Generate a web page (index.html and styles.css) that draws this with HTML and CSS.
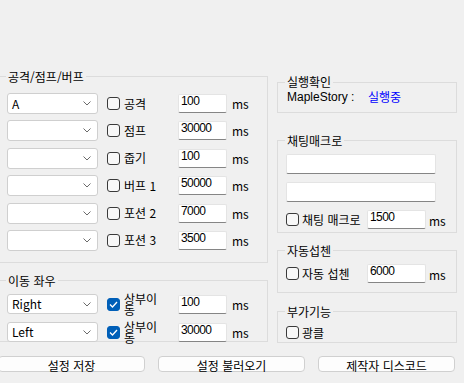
FILE: index.html
```html
<!DOCTYPE html>
<html lang="ko">
<head>
  <meta charset="UTF-8" />
  <title>매크로</title>
  <link rel="stylesheet" href="styles.css">
</head>
<body>
  <div class="app">
    <div class="columns">

      <div class="col-left">
        <div class="group attack">
          <div class="group-title">공격/점프/버프</div>
          <div class="rows">
            <div class="row">
              <div class="combo"><span>A</span><svg width="8" height="5" viewBox="0 0 8 5"><path d="M0.5 0.5 L4 4 L7.5 0.5" fill="none" stroke="#6a6a6a"/></svg></div>
              <label class="check"><span class="box"></span>공격</label>
              <div class="textbox">100</div>
              <span class="unit">ms</span>
            </div>
            <div class="row">
              <div class="combo"><span></span><svg width="8" height="5" viewBox="0 0 8 5"><path d="M0.5 0.5 L4 4 L7.5 0.5" fill="none" stroke="#6a6a6a"/></svg></div>
              <label class="check"><span class="box"></span>점프</label>
              <div class="textbox">30000</div>
              <span class="unit">ms</span>
            </div>
            <div class="row">
              <div class="combo"><span></span><svg width="8" height="5" viewBox="0 0 8 5"><path d="M0.5 0.5 L4 4 L7.5 0.5" fill="none" stroke="#6a6a6a"/></svg></div>
              <label class="check"><span class="box"></span>줍기</label>
              <div class="textbox">100</div>
              <span class="unit">ms</span>
            </div>
            <div class="row">
              <div class="combo"><span></span><svg width="8" height="5" viewBox="0 0 8 5"><path d="M0.5 0.5 L4 4 L7.5 0.5" fill="none" stroke="#6a6a6a"/></svg></div>
              <label class="check"><span class="box"></span>버프 1</label>
              <div class="textbox">50000</div>
              <span class="unit">ms</span>
            </div>
            <div class="row">
              <div class="combo"><span></span><svg width="8" height="5" viewBox="0 0 8 5"><path d="M0.5 0.5 L4 4 L7.5 0.5" fill="none" stroke="#6a6a6a"/></svg></div>
              <label class="check"><span class="box"></span>포션 2</label>
              <div class="textbox">7000</div>
              <span class="unit">ms</span>
            </div>
            <div class="row">
              <div class="combo"><span></span><svg width="8" height="5" viewBox="0 0 8 5"><path d="M0.5 0.5 L4 4 L7.5 0.5" fill="none" stroke="#6a6a6a"/></svg></div>
              <label class="check"><span class="box"></span>포션 3</label>
              <div class="textbox">3500</div>
              <span class="unit">ms</span>
            </div>
          </div>
        </div>

        <div class="group move">
          <div class="group-title">이동 좌우</div>
          <div class="rows move-rows">
            <div class="row short">
              <div class="combo"><span>Right</span><svg width="8" height="5" viewBox="0 0 8 5"><path d="M0.5 0.5 L4 4 L7.5 0.5" fill="none" stroke="#6a6a6a"/></svg></div>
              <label class="check"><span class="box checked"><svg width="9" height="7" viewBox="0 0 9 7"><path d="M1 3.5 L3.5 6 L8 1" fill="none" stroke="#fff" stroke-width="1.3"/></svg></span><span class="wrap">상부이동</span></label>
              <div class="textbox">100</div>
              <span class="unit">ms</span>
            </div>
            <div class="row short">
              <div class="combo"><span>Left</span><svg width="8" height="5" viewBox="0 0 8 5"><path d="M0.5 0.5 L4 4 L7.5 0.5" fill="none" stroke="#6a6a6a"/></svg></div>
              <label class="check"><span class="box checked"><svg width="9" height="7" viewBox="0 0 9 7"><path d="M1 3.5 L3.5 6 L8 1" fill="none" stroke="#fff" stroke-width="1.3"/></svg></span><span class="wrap">상부이동</span></label>
              <div class="textbox">30000</div>
              <span class="unit">ms</span>
            </div>
          </div>
        </div>
      </div>

      <div class="col-right">
        <div class="group status">
          <div class="group-title">실행확인</div>
          <div class="status-line"><span class="status-label">MapleStory :</span><span class="running">실행중</span></div>
        </div>

        <div class="group chat">
          <div class="group-title">채팅매크로</div>
          <div class="inner">
            <div class="textbox wide"></div>
            <div class="textbox wide"></div>
            <div class="row side">
              <label class="check"><span class="box"></span>채팅 매크로</label>
              <div class="textbox small">1500</div>
              <span class="unit">ms</span>
            </div>
          </div>
        </div>

        <div class="group skill">
          <div class="group-title">자동섭첸</div>
          <div class="inner">
            <div class="row side">
              <label class="check"><span class="box"></span>자동 섭첸</label>
              <div class="textbox small">6000</div>
              <span class="unit">ms</span>
            </div>
          </div>
        </div>

        <div class="group extra">
          <div class="group-title">부가기능</div>
          <div class="inner">
            <label class="check"><span class="box"></span>광클</label>
          </div>
        </div>
      </div>

    </div>

    <div class="buttons">
      <button class="btn">설정 저장</button>
      <button class="btn">설정 불러오기</button>
      <button class="btn last">제작자 디스코드</button>
    </div>
  </div>
</body>
</html>
```

FILE: styles.css
```css
*{margin:0;padding:0;box-sizing:border-box;}
html,body{background:#f0f0f0;}
body{font-family:"Noto Sans CJK KR","Noto Sans",sans-serif;font-size:12px;line-height:14px;color:#000;overflow:hidden;}
.app{width:464px;height:383px;}

.columns{display:flex;align-items:flex-start;gap:9px;}
.col-left{width:270px;margin-left:-2px;}
.col-right{width:180px;}

.group{border:1px solid #dcdcdc;}
.group-title{margin:-6px 0 0 7px;padding:0 2px;width:max-content;line-height:12px;background:#f0f0f0;}

/* left side */
.attack{margin-top:76px;height:187px;}
.move{margin-top:17px;height:62px;}
.rows{display:flex;flex-direction:column;gap:6.4px;margin-top:10px;padding-left:8px;}
.move-rows{gap:8px;margin-top:7px;}
.row{display:flex;align-items:center;height:21px;}
.row.short{height:20px;}

.combo{width:91px;height:100%;flex:none;background:#fff;border:1px solid #cfcfcf;border-radius:3px;display:flex;align-items:center;justify-content:space-between;padding:0 6px 0 4px;}
.combo svg{display:block;}

.check{display:flex;align-items:center;gap:4px;width:71px;flex:none;margin-left:9px;white-space:nowrap;}
.box{width:13px;height:13px;flex:none;border:1px solid #3a3a3a;border-radius:3px;background:#f8f8f8;display:flex;align-items:center;justify-content:center;}
.box.checked{background:#005fb8;border-color:#005fb8;}
.wrap{white-space:normal;width:37px;line-height:11px;align-self:flex-start;margin-top:-1px;}

.textbox{width:49px;height:19px;flex:none;align-self:flex-start;margin-top:1px;background:#fff;border:1px solid #e4e4e4;border-bottom-color:#858585;border-radius:2px;padding:0 2px;font-family:"Liberation Sans",sans-serif;font-size:12px;line-height:13px;letter-spacing:-0.6px;}
.unit{align-self:flex-start;margin:4px 0 0 5px;}

/* right side */
.status{margin-top:82px;height:31px;}
.status .group-title{margin-top:-7px;}
.status-line{display:flex;padding-left:9px;margin-top:2px;}
.status-label{width:81px;font-family:"Liberation Sans",sans-serif;}
.running{color:#0000ff;}

.chat{margin-top:27px;height:93px;}
.skill{margin-top:17px;height:43px;}
.extra{margin-top:18px;height:32px;}
.inner{padding-left:8px;display:flex;flex-direction:column;}
.chat .inner{margin-top:7px;}
.skill .inner{margin-top:7px;}
.extra .inner{margin-top:6px;}

.textbox.wide{width:150px;height:20px;margin:0 0 8px 0;}
.row.side{height:19px;}
.side .check{margin-left:0;width:81px;gap:3px;}
.textbox.small{width:59px;margin-top:0;}
.side .unit{margin-left:3px;}
.extra .check{margin-left:0;gap:3px;height:17px;}

/* bottom buttons */
.buttons{display:flex;gap:13px;margin:13px 0 0 -2px;}
.btn{width:147px;height:16px;font:inherit;color:#000;background:#fdfdfd;border:1px solid #d0d0d0;border-radius:4px;padding-top:2px;line-height:14px;}
.btn.last{width:137px;}
```
